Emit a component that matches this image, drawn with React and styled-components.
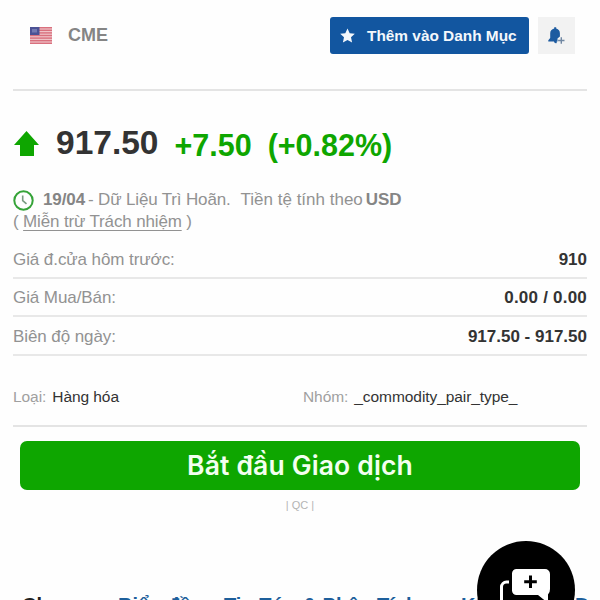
import React from "react";
import styled, { createGlobalStyle } from "styled-components";

const colors = {
  text: "#333333",
  grey: "#929292",
  line: "#e4e4e4",
  green: "#0ea600",
  blue: "#1256a0",
};

const GlobalStyle = createGlobalStyle`
  * {
    box-sizing: border-box;
  }
  body {
    margin: 0;
    background: #fefefe;
    font-family: "Liberation Sans", Arial, sans-serif;
    color: ${colors.text};
  }
`;

const Page = styled.main`
  position: relative;
  width: 600px;
  height: 600px;
  overflow: hidden;
  padding: 0 13px;
`;

const Header = styled.header`
  display: flex;
  align-items: center;
  height: 91px;
  padding: 0 12px 18px 17px;
  border-bottom: 2px solid ${colors.line};
`;

const Exchange = styled.span`
  margin-left: 16px;
  font-size: 18px;
  font-weight: bold;
  color: #858585;
`;

const WatchButton = styled.button`
  display: flex;
  align-items: center;
  width: 199px;
  height: 37px;
  margin-left: auto;
  padding: 0 0 0 10px;
  border: 0;
  border-radius: 3px;
  background: ${colors.blue};
  color: #f4f8fc;
  font-family: inherit;
  font-size: 15.4px;
  font-weight: bold;
  line-height: 20px;
  white-space: nowrap;
  svg {
    margin-right: 12px;
  }
`;

const AlertButton = styled.button`
  display: flex;
  align-items: center;
  justify-content: center;
  width: 37px;
  height: 37px;
  margin-left: 9px;
  padding: 0;
  border: 0;
  background: #f2f2f2;
`;

const PriceRow = styled.div`
  display: flex;
  align-items: flex-start;
  height: 98px;
  padding: 33px 0 0 1px;
  font-weight: bold;
  line-height: 38px;
  white-space: nowrap;
  svg {
    margin-top: 7px;
  }
`;

const LastPrice = styled.span`
  margin-left: 17px;
  font-size: 33.5px;
`;

const Change = styled.span`
  margin-left: 16px;
  font-size: 30.5px;
  line-height: 42px;
  color: ${colors.green};
`;

const Delay = styled.div`
  height: 51px;
  font-size: 17px;
  line-height: 22px;
  color: ${colors.grey};
  white-space: nowrap;
`;

const DelayLine = styled.div`
  display: flex;
  align-items: center;
  height: 22px;
  b {
    color: #858585;
  }
`;

const DelayText = styled.span`
  margin-left: ${(props) => props.$gap || "0"};
  letter-spacing: ${(props) => props.$spacing || "-0.1px"};
`;

const DisclaimerLine = styled.div`
  letter-spacing: -0.15px;
`;

const Disclaimer = styled.a`
  text-decoration: underline;
  text-decoration-thickness: 1px;
  text-underline-offset: 3px;
`;

const Row = styled.div`
  display: flex;
  align-items: center;
  justify-content: space-between;
  height: 38.5px;
  padding-top: 3px;
  border-bottom: 2px solid #e8e8e8;
  font-size: 17px;
  white-space: pre;
`;

const RowLabel = styled.span`
  color: ${colors.grey};
  letter-spacing: -0.08px;
`;

const RowValue = styled.span`
  font-weight: bold;
  letter-spacing: ${(props) => props.$spacing || "0"};
`;

const Details = styled.div`
  display: grid;
  grid-template-columns: 290px 1fr;
  height: 71px;
  padding-top: 31px;
  border-bottom: 2px solid ${colors.line};
  font-size: 15.5px;
  letter-spacing: -0.07px;
  line-height: 20px;
`;

const DetailLabel = styled.span`
  margin-right: 6px;
  color: #a0a0a0;
`;

const TradeButton = styled.button`
  display: block;
  width: 560px;
  height: 49px;
  margin: 14px 0 0 7px;
  padding: 0;
  border: 0;
  border-radius: 7px;
  background: ${colors.green};
  color: #f3fff0;
  font-family: Inter, "Liberation Sans", sans-serif;
  font-size: 26.5px;
  font-weight: 600;
  letter-spacing: 0.15px;
  line-height: 49px;
`;

const AdNote = styled.div`
  margin-top: 8px;
  font-size: 11px;
  line-height: 14px;
  color: #b4b4b4;
  text-align: center;
`;

const Tabs = styled.nav`
  display: flex;
  margin: 77px 0 0;
  padding: 4px 0 0 9px;
  overflow: hidden;
  font-size: 20px;
  font-weight: bold;
  line-height: 24px;
  white-space: nowrap;
`;

const Tab = styled.a`
  flex: none;
  width: ${(props) => props.$width};
  color: ${(props) => (props.$active ? "#222222" : "#1d5f9b")};
`;

const ChatButton = styled.button`
  position: absolute;
  top: 541px;
  left: 477px;
  width: 98px;
  height: 98px;
  padding: 0;
  border: 0;
  border-radius: 50%;
  background: #000000;
  svg {
    display: block;
  }
`;

const Flag = () => (
  <svg width="22" height="17" viewBox="0 0 22 17">
    <rect width="22" height="17" fill="#efc3c8" />
    {[0, 2.6, 5.2, 7.8, 10.4, 13, 15.6].map((y) => (
      <rect key={y} y={y} width="22" height="1.4" fill="#d9707e" />
    ))}
    <rect width="9.5" height="8" fill="#4c5295" />
    <rect x="2" y="2" width="5" height="3.5" fill="#7379b2" />
  </svg>
);

const Star = () => (
  <svg width="15" height="15" viewBox="0 0 15 15">
    <path
      d="M7.5 0.4 9.7 5.2 14.8 5.7 11 9.2 12.1 14.6 7.5 11.9 2.9 14.6 4 9.2 0.2 5.7 5.3 5.2Z"
      fill="#f4f8fc"
    />
  </svg>
);

const BellPlus = () => (
  <svg width="20" height="20" viewBox="0 0 20 20">
    <path
      d="M7.2 1.2h2v1.2c2.4.6 3.7 2.3 3.7 4.8v3.4l-2.4 2v2.8H9.7v1.5c-.8.8-2.4.4-2.7-1.3H1.3v-1.4l1.9-2.2V7.2c0-2.5 1.5-4.2 4-4.8Z"
      fill="#1d5ba0"
    />
    <path d="M14.3 11.3v6.4M11.1 14.5h6.4" stroke="#7087a2" strokeWidth="1.4" />
  </svg>
);

const ArrowUp = () => (
  <svg width="25" height="25" viewBox="0 0 25 25">
    <path d="M12.5 0 25 14H20V25H6V14H0Z" fill={colors.green} />
  </svg>
);

const Clock = () => (
  <svg width="21" height="21" viewBox="0 0 21 21" fill="none">
    <circle cx="10.5" cy="10.5" r="9.2" stroke="#35a338" strokeWidth="2" />
    <path d="M9.7 5.6v5l3.8 3.2" stroke="#799a80" strokeWidth="1.6" />
  </svg>
);

const ChatPlus = () => (
  <svg width="98" height="98" viewBox="0 0 98 98">
    <path
      d="M32 41h-2.5a5 5 0 0 0-5 5V76h30"
      fill="none"
      stroke="#ffffff"
      strokeWidth="3"
    />
    <path
      d="M39.5 28H68a5 5 0 0 1 5 5V48q0 4-2 5.5V62L61 54H39.5a4.5 4.5 0 0 1-4.5-4.5V32.5A4.5 4.5 0 0 1 39.5 28Z"
      fill="#ffffff"
    />
    <path d="M53.5 34.5v12.5M47.2 40.8h12.6" stroke="#000000" strokeWidth="3" />
  </svg>
);

const rows = [
  { label: "Giá đ.cửa hôm trước:", value: "910" },
  { label: "Giá Mua/Bán:", value: "0.00 / 0.00", spacing: "0.22px" },
  { label: "Biên độ ngày:", value: "917.50 - 917.50" },
];

export default function App() {
  return (
    <Page>
      <GlobalStyle />
      <Header>
        <Flag />
        <Exchange>CME</Exchange>
        <WatchButton>
          <Star />
          Thêm vào Danh Mục
        </WatchButton>
        <AlertButton>
          <BellPlus />
        </AlertButton>
      </Header>
      <PriceRow>
        <ArrowUp />
        <LastPrice>917.50</LastPrice>
        <Change>+7.50</Change>
        <Change>(+0.82%)</Change>
      </PriceRow>
      <Delay>
        <DelayLine>
          <Clock />
          <DelayText $gap="9px">
            <b>19/04</b>
          </DelayText>
          <DelayText $gap="3px" $spacing="-0.16px">
            - Dữ Liệu Trì Hoãn.
          </DelayText>
          <DelayText $gap="10px" $spacing="0px">
            Tiền tệ tính theo
          </DelayText>
          <DelayText $gap="3px">
            <b>USD</b>
          </DelayText>
        </DelayLine>
        <DisclaimerLine>
          ( <Disclaimer>Miễn trừ Trách nhiệm</Disclaimer> )
        </DisclaimerLine>
      </Delay>
      {rows.map((row) => (
        <Row key={row.label}>
          <RowLabel>{row.label}</RowLabel>
          <RowValue $spacing={row.spacing}>{row.value}</RowValue>
        </Row>
      ))}
      <Details>
        <div>
          <DetailLabel>Loại:</DetailLabel>
          Hàng hóa
        </div>
        <div>
          <DetailLabel>Nhóm:</DetailLabel>
          _commodity_pair_type_
        </div>
      </Details>
      <TradeButton>Bắt đầu Giao dịch</TradeButton>
      <AdNote>| QC |</AdNote>
      <Tabs>
        <Tab $active $width="96px">
          Chung
        </Tab>
        <Tab $width="106px">Biểu đồ</Tab>
        <Tab $width="237px">Tin Tức &amp; Phân Tích</Tab>
        <Tab $width="114px">Kỹ thuật</Tab>
        <Tab $width="90px">Diễn đàn</Tab>
      </Tabs>
      <ChatButton>
        <ChatPlus />
      </ChatButton>
    </Page>
  );
}
